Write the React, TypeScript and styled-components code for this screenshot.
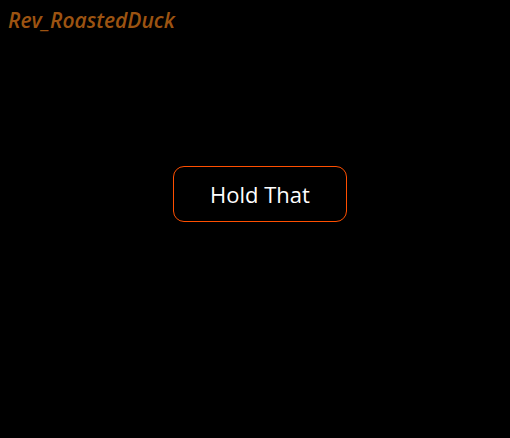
import React from 'react';
import styled, { createGlobalStyle } from 'styled-components';

const GlobalStyle = createGlobalStyle`
  html, body {
    margin: 0;
    padding: 0;
    background: #000;
  }
  body {
    font-family: 'Open Sans', 'Noto Sans', sans-serif;
  }
`;

const Page = styled.div`
  width: 510px;
  height: 438px;
  background: #000;
  display: flex;
  flex-direction: column;
`;

const Title = styled.div`
  padding: 7px 0 0 8px;
  font-family: 'Open Sans', sans-serif;
  font-style: italic;
  font-weight: 600;
  font-size: 21px;
  line-height: 27px;
  color: #9c5311;
`;

const Stage = styled.div`
  display: flex;
  justify-content: center;
  padding: 132px 0 0 10px;
`;

const HoldButton = styled.button`
  width: 174px;
  height: 56px;
  background: transparent;
  border: 1px solid #ff4f00;
  border-radius: 11px;
  color: #fff;
  font-family: 'Open Sans', sans-serif;
  font-size: 22px;
  cursor: pointer;
`;

export default function App() {
  return (
    <>
      <GlobalStyle />
      <Page>
        <Title>Rev_RoastedDuck</Title>
        <Stage>
          <HoldButton>Hold That</HoldButton>
        </Stage>
      </Page>
    </>
  );
}
